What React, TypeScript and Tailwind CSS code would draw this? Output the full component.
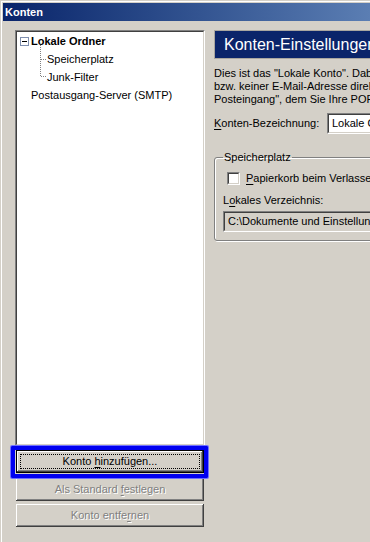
import React from "react";

function Btn({
  children,
  disabled,
  focused,
  className = "",
}: {
  children: React.ReactNode;
  disabled?: boolean;
  focused?: boolean;
  className?: string;
}) {
  return (
    <div
      className={
        "relative h-[23px] flex items-center justify-center bg-[#d4d0c8] " +
        (focused
          ? "border border-black shadow-[inset_-1px_-1px_0_#404040,inset_1px_1px_0_#ffffff,inset_-2px_-2px_0_#808080] "
          : "shadow-[inset_-1px_-1px_0_#404040,inset_1px_1px_0_#ffffff,inset_-2px_-2px_0_#808080] ") +
        (disabled ? "text-[#808080] [text-shadow:1px_1px_0_#ffffff] " : "text-black ") +
        className
      }
    >
      {focused && (
        <div className="absolute inset-[3px] border border-dotted border-black" />
      )}
      <span className="relative leading-[13px]">{children}</span>
    </div>
  );
}

export default function App() {
  return (
    <div className="relative w-[370px] h-[542px] overflow-hidden bg-[#d4d0c8] text-[11px] text-black font-['Liberation_Sans',Arial,sans-serif]">
      <div className="absolute left-px top-px right-0 bottom-0 border-t border-l border-white" />
      <div className="relative pt-[3px] pl-[3px] h-full flex flex-col">
        {/* title bar */}
        <div className="h-[18px] bg-linear-to-r from-[#0a246a] to-[#5b7eb3] flex items-center pl-[2px] shrink-0">
          <span className="text-white font-bold text-[11px] leading-[13px]">Konten</span>
        </div>

        {/* body */}
        <div className="flex flex-1">
          {/* left column */}
          <div className="ml-[12px] mt-[9px] w-[190px] shrink-0 flex flex-col">
            <div className="h-[416px] border border-[#808080] border-b-white border-r-white">
              <div className="relative h-full bg-white border border-[#404040] border-b-[#d4d0c8] border-r-[#d4d0c8]">
                <svg
                  className="absolute left-0 top-0"
                  width="40"
                  height="60"
                  viewBox="0 0 40 60"
                >
                  <path
                    d="M23.5 13 V44.5 M24 27.5 H29 M24 44.5 H29"
                    stroke="#808080"
                    strokeWidth="1"
                    strokeDasharray="1 1"
                    fill="none"
                  />
                </svg>
                <div className="flex flex-col">
                  <div className="h-[18px] flex items-center pl-[3px]">
                    <div className="w-[9px] h-[9px] border border-[#7f8fb0] bg-white flex items-center justify-center">
                      <div className="w-[5px] h-px bg-black" />
                    </div>
                    <span className="ml-[2px] font-bold leading-[13px]">Lokale Ordner</span>
                  </div>
                  <div className="h-[18px] flex items-center pl-[30px]">
                    <span className="leading-[13px]">Speicherplatz</span>
                  </div>
                  <div className="h-[18px] flex items-center pl-[30px]">
                    <span className="leading-[13px]">Junk-Filter</span>
                  </div>
                  <div className="h-[18px] flex items-center pl-[14px]">
                    <span className="leading-[13px]">Postausgang-Server (SMTP)</span>
                  </div>
                </div>
              </div>
            </div>

            <div className="mx-px mt-[4px] flex flex-col">
              <Btn focused>
                Konto <span className="underline underline-offset-2">h</span>inzufügen...
              </Btn>
              <Btn disabled className="mt-[5px]">
                Als Standard <span className="underline underline-offset-2">f</span>estlegen
              </Btn>
              <Btn disabled className="mt-[3px]">
                Konto entfe<span className="underline underline-offset-2">r</span>nen
              </Btn>
            </div>
          </div>

          {/* right column */}
          <div className="ml-[9px] mt-[9px] w-[420px] shrink-0 flex flex-col">
            <div className="h-[29px] bg-[#0a246a] border border-[#a9a6a0] flex items-center pl-[9px]">
              <span className="text-white text-[16px] leading-[18px] whitespace-nowrap">
                Konten-Einstellungen
              </span>
            </div>
            <div className="mt-[8px] leading-[13px] whitespace-nowrap">
              <div>Dies ist das "Lokale Konto". Dabei handelt es sich um ein Konto ohne Server</div>
              <div>bzw. keiner E-Mail-Adresse direkt zugeordnet. Es dient als gemeinsamer</div>
              <div>Posteingang", dem Sie Ihre POP-Konten zuordnen können.</div>
            </div>
            <div className="mt-[7px] flex items-center h-[21px]">
              <span className="w-[113px] shrink-0 leading-[13px] whitespace-nowrap">
                <span className="underline underline-offset-2">K</span>onten-Bezeichnung:
              </span>
              <div className="h-[21px] w-[250px] bg-white border border-[#808080] border-b-white border-r-white">
                <div className="h-full border border-[#404040] border-b-[#d4d0c8] border-r-[#d4d0c8] flex items-center pl-[3px]">
                  <span className="leading-[13px] whitespace-nowrap">Lokale Ordner</span>
                </div>
              </div>
            </div>

            <fieldset className="mt-[17px] mr-[20px] border border-[#808080] rounded-[3px] shadow-[1px_1px_0_#ffffff,inset_1px_1px_0_#ffffff] pl-[8px] pb-[8px]">
              <legend className="px-[1px] leading-[13px]">Speicherplatz</legend>
              <div className="mt-[8px] pl-[4px] flex items-center">
                <div className="w-[13px] h-[13px] border border-[#808080] border-b-white border-r-white shrink-0">
                  <div className="h-full bg-white border border-[#404040] border-b-[#d4d0c8] border-r-[#d4d0c8]" />
                </div>
                <span className="ml-[6px] leading-[13px] whitespace-nowrap">
                  <span className="underline underline-offset-2">P</span>apierkorb beim Verlassen des Programms leeren
                </span>
              </div>
              <div className="mt-[9px] leading-[13px] whitespace-nowrap">
                L<span className="underline underline-offset-2">o</span>kales Verzeichnis:
              </div>
              <div className="mt-[4px] h-[21px] bg-[#d4d0c8] border border-[#808080] border-b-white border-r-white">
                <div className="h-full border border-[#404040] border-b-[#d4d0c8] border-r-[#d4d0c8] flex items-center pl-[3px]">
                  <span className="leading-[13px] whitespace-nowrap">
                    C:\Dokumente und Einstellungen\Benutzer\Anwendungsdaten
                  </span>
                </div>
              </div>
            </fieldset>
          </div>
        </div>
      </div>

      {/* highlight annotation around button */}
      <div className="absolute left-[11px] top-[446px] w-[197px] h-[32px] border-[4px] border-[#0000f0] rounded-[1px] shadow-[0_0_0_1px_#7070ff]" />
    </div>
  );
}
